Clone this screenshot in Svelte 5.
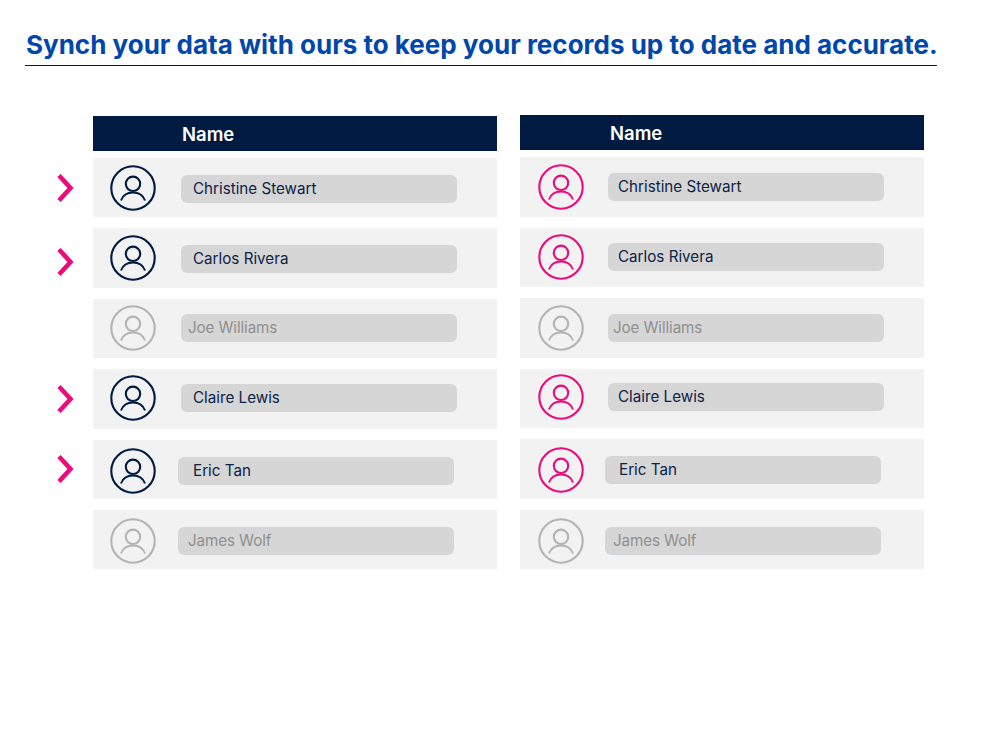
<script>
  // one list per table, the left table also has the sync arrows
  const people = [
    { name: 'Christine Stewart', active: true, band: 'top' },
    { name: 'Carlos Rivera', active: true, band: 'top', nudge: true },
    { name: 'Joe Williams', active: false, band: '' },
    { name: 'Claire Lewis', active: true, band: 'high' },
    { name: 'Eric Tan', active: true, band: 'low' },
    { name: 'James Wolf', active: false, band: 'low' }
  ];
</script>

{#snippet avatar(tone)}
  <svg class="avatar {tone}" width="46" height="46" viewBox="0 0 46 46" fill="none">
    <circle cx="23" cy="23" r="21.7" />
    <circle cx="23" cy="18.8" r="7.2" />
    <path d="M11 35.5C13 30 18 27.5 23 27.5C28 27.5 33 30 35 35.5" />
  </svg>
{/snippet}

<main>
  <h1>Synch your data with ours to keep your records up to date and accurate.</h1>

  <div class="tables">
    <section class="table left">
      <div class="slot"></div>
      <div class="head">Name</div>
      {#each people as p}
        <div class="slot">
          {#if p.active}
            <svg class="arrow" class:nudged={p.nudge} width="18" height="30" viewBox="0 0 18 30" fill="none">
              <path d="M3 2.5L14.5 15L3 27.5" />
            </svg>
          {/if}
        </div>
        <div class="row {p.band}">
          {@render avatar(p.active ? 'navy' : 'grey')}
          <div class="pill" class:muted={!p.active}>{p.name}</div>
        </div>
      {/each}
    </section>

    <section class="table right">
      <div class="head">Name</div>
      {#each people as p}
        <div class="row {p.band}">
          {@render avatar(p.active ? 'pink' : 'grey')}
          <div class="pill" class:muted={!p.active}>{p.name}</div>
        </div>
      {/each}
    </section>
  </div>
</main>

<style>
  :global(body) {
    background: #fff;
  }

  main {
    width: 1001px;
    height: 731px;
    box-sizing: border-box;
    padding: 29px 0 0 25px;
    font-family: Inter, "Liberation Sans", sans-serif;
    overflow: hidden;
  }

  h1 {
    width: 912px;
    box-sizing: border-box;
    margin: 0;
    padding: 0 0 5px 1px;
    border-bottom: 1px solid #001b41;
    color: #0047ab;
    font-size: 26px;
    line-height: 31px;
    font-weight: 700;
    white-space: nowrap;
  }

  .tables {
    display: flex;
    gap: 23px;
    margin-top: 49px;
  }

  .table {
    display: grid;
    grid-template-columns: 404px;
    row-gap: 7px;
  }

  .table.left {
    grid-template-columns: 68px 404px;
    margin-top: 1px;
  }

  .head {
    height: 35px;
    box-sizing: border-box;
    padding-left: 89px;
    background: #001b41;
    color: #fff;
    font-size: 18.5px;
    font-weight: 600;
    line-height: 37px;
  }

  .right .head {
    padding-left: 90px;
  }

  .slot {
    display: flex;
    align-items: center;
    justify-content: flex-end;
    padding: 0 19px 4px 0;
  }

  .arrow path {
    stroke: #ec0b7b;
    stroke-width: 4.6;
  }

  .arrow.nudged {
    position: relative;
    top: 4px;
  }

  .row {
    display: flex;
    align-items: center;
    gap: 25px;
    box-sizing: border-box;
    height: 59.4px;
    margin-bottom: 4px;
    padding-left: 17px;
    background: #f2f2f2;
  }

  .right .row {
    gap: 24px;
    padding-left: 18px;
  }

  .row.high {
    padding-bottom: 2px;
  }

  .row.low {
    padding-top: 3px;
  }

  .avatar {
    flex: none;
    stroke-width: 2.1;
  }

  .avatar :global(*) {
    stroke: currentColor;
  }

  .navy { color: #001b41; }
  .pink { color: #ec0b7b; }
  .grey { color: #b4b4b4; }

  .pill {
    width: 276px;
    height: 28px;
    box-sizing: border-box;
    padding-left: 12px;
    border-radius: 6px;
    background: #d6d6d6;
    color: #0d2347;
    font-size: 15.2px;
    line-height: 28px;
  }

  .pill.muted {
    padding-left: 7px;
    color: #8f8f8f;
    letter-spacing: -0.1px;
  }

  .row.low .pill {
    margin-left: -3px;
    padding-left: 15px;
  }

  .row.low .pill.muted {
    padding-left: 10px;
  }

  .left .row.top .pill {
    margin-top: 2px;
  }

  .right .pill {
    padding-left: 10px;
  }

  .right .pill.muted {
    padding-left: 5px;
  }

  .right .row.low .pill {
    padding-left: 14px;
  }

  .right .row.low .pill.muted {
    padding-left: 8px;
  }
</style>
